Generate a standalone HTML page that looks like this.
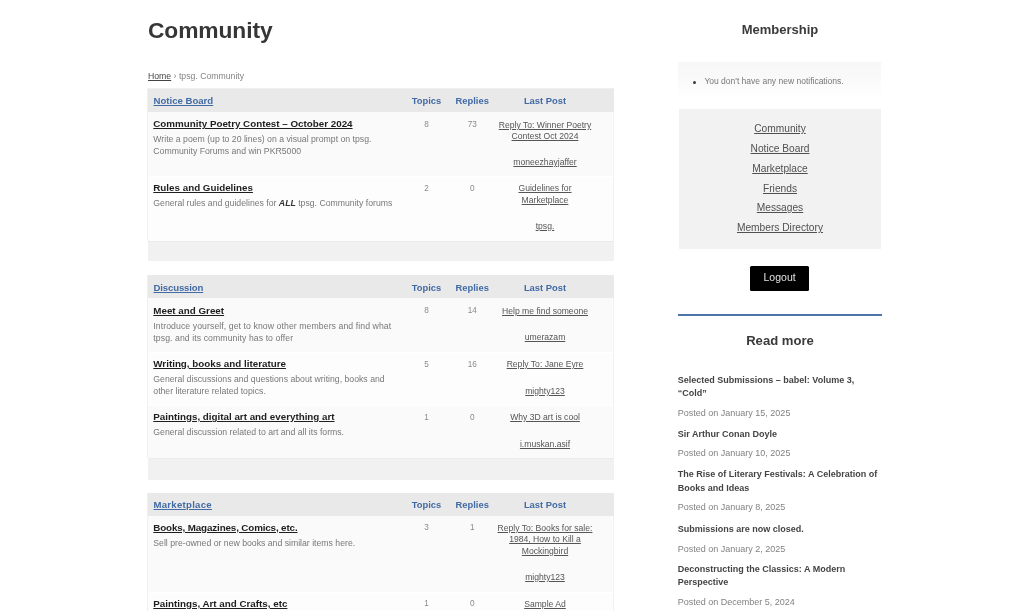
<!DOCTYPE html>
<html><head><meta charset="utf-8"><title>Community</title>
<style>
html,body{margin:0;padding:0;background:#fff;width:1024px;height:611px;overflow:hidden;}
body{position:relative;font-family:"Liberation Sans",sans-serif;filter:blur(0.3px);}
body>div{position:absolute;}
.t{white-space:nowrap;}
</style></head><body>
<div class="t" style="top:17px;font-size:22.8px;line-height:27.36px;font-weight:700;color:#363636;left:148px;letter-spacing:-0.1px;">Community</div>
<div class="t" style="top:71px;font-size:8.7px;line-height:10.44px;font-weight:400;color:#858585;left:148px;"><span style="color:#444;text-decoration:underline">Home</span> › tpsg. Community</div>
<div style="left:146.8px;top:88.4px;width:467.6px;height:23.4px;background:#f0f0f0;"></div>
<div style="left:147.6px;top:88.7px;width:466px;height:23.1px;background:#e9e9e9;"></div>
<div class="t" style="top:95px;font-size:9.6px;line-height:11.52px;font-weight:700;color:#426aa5;text-decoration:underline;left:153.5px;letter-spacing:0px;">Notice Board</div>
<div class="t" style="top:95px;font-size:9.4px;line-height:11.28px;font-weight:700;color:#426aa5;left:176.5px;width:500px;text-align:center;">Topics</div>
<div class="t" style="top:95px;font-size:9.4px;line-height:11.28px;font-weight:700;color:#426aa5;left:222.2px;width:500px;text-align:center;">Replies</div>
<div class="t" style="top:95px;font-size:9.4px;line-height:11.28px;font-weight:700;color:#426aa5;left:295px;width:500px;text-align:center;">Last Post</div>
<div style="left:146.6px;top:111.8px;width:467.8px;height:64.6px;background:#f1f1f1;"></div>
<div style="left:147.6px;top:111.8px;width:465.8px;height:64.6px;background:#fdfdfd;"></div>
<div style="left:148.4px;top:111.8px;width:464px;height:64.6px;background:#fafafa;"></div>
<div class="t" style="top:118px;font-size:9.8px;line-height:11.76px;font-weight:700;color:#1e1e1e;text-decoration:underline;left:153.3px;letter-spacing:0px;">Community Poetry Contest – October 2024</div>
<div class="t" style="top:134px;font-size:8.7px;line-height:10.44px;font-weight:400;color:#787878;left:153.3px;letter-spacing:0px;">Write a poem (up to 20 lines) on a visual prompt on tpsg.</div>
<div class="t" style="top:146px;font-size:8.7px;line-height:10.44px;font-weight:400;color:#787878;left:153.3px;letter-spacing:0px;">Community Forums and win PKR5000</div>
<div class="t" style="top:120px;font-size:8.2px;line-height:9.84px;font-weight:400;color:#8a8a8a;left:176.5px;width:500px;text-align:center;">8</div>
<div class="t" style="top:120px;font-size:8.2px;line-height:9.84px;font-weight:400;color:#8a8a8a;left:222.2px;width:500px;text-align:center;">73</div>
<div class="t" style="top:120px;font-size:8.6px;line-height:10.32px;font-weight:400;color:#555;text-decoration:underline;left:295px;width:500px;text-align:center;">Reply To: Winner Poetry</div>
<div class="t" style="top:131px;font-size:8.6px;line-height:10.32px;font-weight:400;color:#555;text-decoration:underline;left:295px;width:500px;text-align:center;">Contest Oct 2024</div>
<div class="t" style="top:157px;font-size:8.6px;line-height:10.32px;font-weight:400;color:#555;text-decoration:underline;left:295px;width:500px;text-align:center;">moneezhayjaffer</div>
<div style="left:146.6px;top:176.4px;width:467.8px;height:64.4px;background:#f1f1f1;"></div>
<div style="left:147.6px;top:176.4px;width:465.8px;height:64.4px;background:#fdfdfd;"></div>
<div style="left:148.4px;top:176.4px;width:464px;height:64.4px;background:#fdfdfd;"></div>
<div class="t" style="top:182px;font-size:9.8px;line-height:11.76px;font-weight:700;color:#1e1e1e;text-decoration:underline;left:153.3px;letter-spacing:0px;">Rules and Guidelines</div>
<div class="t" style="top:198px;font-size:8.7px;line-height:10.44px;font-weight:400;color:#787878;left:153.3px;letter-spacing:0px;">General rules and guidelines for <b style="color:#333"><i>ALL</i></b> tpsg. Community forums</div>
<div class="t" style="top:184px;font-size:8.2px;line-height:9.84px;font-weight:400;color:#8a8a8a;left:176.5px;width:500px;text-align:center;">2</div>
<div class="t" style="top:184px;font-size:8.2px;line-height:9.84px;font-weight:400;color:#8a8a8a;left:222.2px;width:500px;text-align:center;">0</div>
<div class="t" style="top:183px;font-size:8.6px;line-height:10.32px;font-weight:400;color:#555;text-decoration:underline;left:295px;width:500px;text-align:center;">Guidelines for</div>
<div class="t" style="top:195px;font-size:8.6px;line-height:10.32px;font-weight:400;color:#555;text-decoration:underline;left:295px;width:500px;text-align:center;">Marketplace</div>
<div class="t" style="top:221px;font-size:8.6px;line-height:10.32px;font-weight:400;color:#555;text-decoration:underline;left:295px;width:500px;text-align:center;">tpsg.</div>
<div style="left:147.5px;top:175.9px;width:466.7px;height:1px;background:#ffffff;"></div>
<div style="left:147.5px;top:240.8px;width:466.7px;height:20.2px;background:#f1f1f1;border-top:1px solid #ebebeb;box-sizing:border-box"></div>
<div style="left:146.8px;top:275px;width:467.6px;height:22.8px;background:#f0f0f0;"></div>
<div style="left:147.6px;top:275.3px;width:466px;height:22.5px;background:#e9e9e9;"></div>
<div class="t" style="top:282px;font-size:9.6px;line-height:11.52px;font-weight:700;color:#426aa5;text-decoration:underline;left:153.5px;letter-spacing:-0.15px;">Discussion</div>
<div class="t" style="top:282px;font-size:9.4px;line-height:11.28px;font-weight:700;color:#426aa5;left:176.5px;width:500px;text-align:center;">Topics</div>
<div class="t" style="top:282px;font-size:9.4px;line-height:11.28px;font-weight:700;color:#426aa5;left:222.2px;width:500px;text-align:center;">Replies</div>
<div class="t" style="top:282px;font-size:9.4px;line-height:11.28px;font-weight:700;color:#426aa5;left:295px;width:500px;text-align:center;">Last Post</div>
<div style="left:146.6px;top:297.8px;width:467.8px;height:54.5px;background:#f1f1f1;"></div>
<div style="left:147.6px;top:297.8px;width:465.8px;height:54.5px;background:#fdfdfd;"></div>
<div style="left:148.4px;top:297.8px;width:464px;height:54.5px;background:#fafafa;"></div>
<div class="t" style="top:305px;font-size:9.8px;line-height:11.76px;font-weight:700;color:#1e1e1e;text-decoration:underline;left:153.3px;letter-spacing:0px;">Meet and Greet</div>
<div class="t" style="top:321px;font-size:8.7px;line-height:10.44px;font-weight:400;color:#787878;left:153.3px;letter-spacing:0.08px;">Introduce yourself, get to know other members and find what</div>
<div class="t" style="top:333px;font-size:8.7px;line-height:10.44px;font-weight:400;color:#787878;left:153.3px;letter-spacing:0.08px;">tpsg. and its community has to offer</div>
<div class="t" style="top:306px;font-size:8.2px;line-height:9.84px;font-weight:400;color:#8a8a8a;left:176.5px;width:500px;text-align:center;">8</div>
<div class="t" style="top:306px;font-size:8.2px;line-height:9.84px;font-weight:400;color:#8a8a8a;left:222.2px;width:500px;text-align:center;">14</div>
<div class="t" style="top:306px;font-size:8.6px;line-height:10.32px;font-weight:400;color:#555;text-decoration:underline;left:295px;width:500px;text-align:center;">Help me find someone</div>
<div class="t" style="top:332px;font-size:8.6px;line-height:10.32px;font-weight:400;color:#555;text-decoration:underline;left:295px;width:500px;text-align:center;">umerazam</div>
<div style="left:146.6px;top:352.3px;width:467.8px;height:52.8px;background:#f1f1f1;"></div>
<div style="left:147.6px;top:352.3px;width:465.8px;height:52.8px;background:#fdfdfd;"></div>
<div style="left:148.4px;top:352.3px;width:464px;height:52.8px;background:#fdfdfd;"></div>
<div class="t" style="top:358px;font-size:9.8px;line-height:11.76px;font-weight:700;color:#1e1e1e;text-decoration:underline;left:153.3px;letter-spacing:0px;">Writing, books and literature</div>
<div class="t" style="top:374px;font-size:8.7px;line-height:10.44px;font-weight:400;color:#787878;left:153.3px;letter-spacing:0px;">General discussions and questions about writing, books and</div>
<div class="t" style="top:386px;font-size:8.7px;line-height:10.44px;font-weight:400;color:#787878;left:153.3px;letter-spacing:0px;">other literature related topics.</div>
<div class="t" style="top:360px;font-size:8.2px;line-height:9.84px;font-weight:400;color:#8a8a8a;left:176.5px;width:500px;text-align:center;">5</div>
<div class="t" style="top:360px;font-size:8.2px;line-height:9.84px;font-weight:400;color:#8a8a8a;left:222.2px;width:500px;text-align:center;">16</div>
<div class="t" style="top:359px;font-size:8.6px;line-height:10.32px;font-weight:400;color:#555;text-decoration:underline;left:295px;width:500px;text-align:center;">Reply To: Jane Eyre</div>
<div class="t" style="top:386px;font-size:8.6px;line-height:10.32px;font-weight:400;color:#555;text-decoration:underline;left:295px;width:500px;text-align:center;">mighty123</div>
<div style="left:146.6px;top:405.1px;width:467.8px;height:52.7px;background:#f1f1f1;"></div>
<div style="left:147.6px;top:405.1px;width:465.8px;height:52.7px;background:#fdfdfd;"></div>
<div style="left:148.4px;top:405.1px;width:464px;height:52.7px;background:#fafafa;"></div>
<div class="t" style="top:411px;font-size:9.8px;line-height:11.76px;font-weight:700;color:#1e1e1e;text-decoration:underline;left:153.3px;letter-spacing:0px;">Paintings, digital art and everything art</div>
<div class="t" style="top:427px;font-size:8.7px;line-height:10.44px;font-weight:400;color:#787878;left:153.3px;letter-spacing:0px;">General discussion related to art and all its forms.</div>
<div class="t" style="top:413px;font-size:8.2px;line-height:9.84px;font-weight:400;color:#8a8a8a;left:176.5px;width:500px;text-align:center;">1</div>
<div class="t" style="top:413px;font-size:8.2px;line-height:9.84px;font-weight:400;color:#8a8a8a;left:222.2px;width:500px;text-align:center;">0</div>
<div class="t" style="top:412px;font-size:8.6px;line-height:10.32px;font-weight:400;color:#555;text-decoration:underline;left:295px;width:500px;text-align:center;">Why 3D art is cool</div>
<div class="t" style="top:439px;font-size:8.6px;line-height:10.32px;font-weight:400;color:#555;text-decoration:underline;left:295px;width:500px;text-align:center;">i.muskan.asif</div>
<div style="left:147.5px;top:351.8px;width:466.7px;height:1px;background:#ffffff;"></div>
<div style="left:147.5px;top:404.6px;width:466.7px;height:1px;background:#ffffff;"></div>
<div style="left:147.5px;top:457.8px;width:466.7px;height:21.9px;background:#f1f1f1;border-top:1px solid #ebebeb;box-sizing:border-box"></div>
<div style="left:146.8px;top:492.6px;width:467.6px;height:23.4px;background:#f0f0f0;"></div>
<div style="left:147.6px;top:492.9px;width:466px;height:23.1px;background:#e9e9e9;"></div>
<div class="t" style="top:499px;font-size:9.6px;line-height:11.52px;font-weight:700;color:#426aa5;text-decoration:underline;left:153.5px;letter-spacing:0.27px;">Marketplace</div>
<div class="t" style="top:499px;font-size:9.4px;line-height:11.28px;font-weight:700;color:#426aa5;left:176.5px;width:500px;text-align:center;">Topics</div>
<div class="t" style="top:499px;font-size:9.4px;line-height:11.28px;font-weight:700;color:#426aa5;left:222.2px;width:500px;text-align:center;">Replies</div>
<div class="t" style="top:499px;font-size:9.4px;line-height:11.28px;font-weight:700;color:#426aa5;left:295px;width:500px;text-align:center;">Last Post</div>
<div style="left:146.6px;top:516px;width:467.8px;height:76.5px;background:#f1f1f1;"></div>
<div style="left:147.6px;top:516px;width:465.8px;height:76.5px;background:#fdfdfd;"></div>
<div style="left:148.4px;top:516px;width:464px;height:76.5px;background:#fafafa;"></div>
<div class="t" style="top:522px;font-size:9.8px;line-height:11.76px;font-weight:700;color:#1e1e1e;text-decoration:underline;left:153.3px;letter-spacing:-0.13px;">Books, Magazines, Comics, etc.</div>
<div class="t" style="top:538px;font-size:8.7px;line-height:10.44px;font-weight:400;color:#787878;left:153.3px;letter-spacing:0px;">Sell pre-owned or new books and similar items here.</div>
<div class="t" style="top:523px;font-size:8.2px;line-height:9.84px;font-weight:400;color:#8a8a8a;left:176.5px;width:500px;text-align:center;">3</div>
<div class="t" style="top:523px;font-size:8.2px;line-height:9.84px;font-weight:400;color:#8a8a8a;left:222.2px;width:500px;text-align:center;">1</div>
<div class="t" style="top:523px;font-size:8.6px;line-height:10.32px;font-weight:400;color:#555;text-decoration:underline;left:295px;width:500px;text-align:center;">Reply To: Books for sale:</div>
<div class="t" style="top:534px;font-size:8.6px;line-height:10.32px;font-weight:400;color:#555;text-decoration:underline;left:295px;width:500px;text-align:center;">1984, How to Kill a</div>
<div class="t" style="top:546px;font-size:8.6px;line-height:10.32px;font-weight:400;color:#555;text-decoration:underline;left:295px;width:500px;text-align:center;">Mockingbird</div>
<div class="t" style="top:572px;font-size:8.6px;line-height:10.32px;font-weight:400;color:#555;text-decoration:underline;left:295px;width:500px;text-align:center;">mighty123</div>
<div style="left:146.6px;top:592.5px;width:467.8px;height:67.5px;background:#f1f1f1;"></div>
<div style="left:147.6px;top:592.5px;width:465.8px;height:67.5px;background:#fdfdfd;"></div>
<div style="left:148.4px;top:592.5px;width:464px;height:67.5px;background:#fdfdfd;"></div>
<div class="t" style="top:598px;font-size:9.8px;line-height:11.76px;font-weight:700;color:#1e1e1e;text-decoration:underline;left:153.3px;letter-spacing:0px;">Paintings, Art and Crafts, etc</div>
<div class="t" style="top:599px;font-size:8.2px;line-height:9.84px;font-weight:400;color:#8a8a8a;left:176.5px;width:500px;text-align:center;">1</div>
<div class="t" style="top:599px;font-size:8.2px;line-height:9.84px;font-weight:400;color:#8a8a8a;left:222.2px;width:500px;text-align:center;">0</div>
<div class="t" style="top:599px;font-size:8.6px;line-height:10.32px;font-weight:400;color:#555;text-decoration:underline;left:295px;width:500px;text-align:center;">Sample Ad</div>
<div style="left:147.5px;top:592px;width:466.7px;height:1px;background:#ffffff;"></div>
<div class="t" style="top:22px;font-size:13.0px;line-height:15.6px;font-weight:700;color:#3a3a3a;left:530px;width:500px;text-align:center;">Membership</div>
<div style="left:678px;top:62px;width:203px;height:38px;background:linear-gradient(#f7f7f7, #f9f9f9 40%, #ffffff);"></div>
<div style="left:693px;top:80.5px;width:3px;height:3px;border-radius:50%;background:#3a3a3a"></div>
<div class="t" style="top:76px;font-size:8.5px;line-height:10.2px;font-weight:400;color:#777;left:704.4px;">You don't have any new notifications.</div>
<div style="left:678.6px;top:109.3px;width:202.4px;height:139.9px;background:#f2f2f2;"></div>
<div class="t" style="top:123px;font-size:10.2px;line-height:12.24px;font-weight:400;color:#505050;text-decoration:underline;left:530px;width:500px;text-align:center;">Community</div>
<div class="t" style="top:143px;font-size:10.2px;line-height:12.24px;font-weight:400;color:#505050;text-decoration:underline;left:530px;width:500px;text-align:center;">Notice Board</div>
<div class="t" style="top:163px;font-size:10.2px;line-height:12.24px;font-weight:400;color:#505050;text-decoration:underline;left:530px;width:500px;text-align:center;">Marketplace</div>
<div class="t" style="top:183px;font-size:10.2px;line-height:12.24px;font-weight:400;color:#505050;text-decoration:underline;left:530px;width:500px;text-align:center;">Friends</div>
<div class="t" style="top:202px;font-size:10.2px;line-height:12.24px;font-weight:400;color:#505050;text-decoration:underline;left:530px;width:500px;text-align:center;">Messages</div>
<div class="t" style="top:222px;font-size:10.2px;line-height:12.24px;font-weight:400;color:#505050;text-decoration:underline;left:530px;width:500px;text-align:center;">Members Directory</div>
<div style="left:750.3px;top:265.5px;width:58.5px;height:25px;background:#000;border-radius:1.5px"></div>
<div class="t" style="top:271px;font-size:10.5px;line-height:12.6px;font-weight:400;color:#e0e0e0;left:529.6px;width:500px;text-align:center;">Logout</div>
<div style="left:678px;top:314px;width:203.5px;height:2px;background:#4e75a8;"></div>
<div class="t" style="top:333px;font-size:13.1px;line-height:15.72px;font-weight:700;color:#3a3a3a;left:530px;width:500px;text-align:center;">Read more</div>
<div class="t" style="top:375px;font-size:9.0px;line-height:10.8px;font-weight:700;color:#444;left:677.8px;">Selected Submissions – babel: Volume 3,</div>
<div class="t" style="top:388px;font-size:9.0px;line-height:10.8px;font-weight:700;color:#444;left:677.8px;">“Cold”</div>
<div class="t" style="top:408px;font-size:9.0px;line-height:10.8px;font-weight:400;color:#828282;left:677.8px;">Posted on January 15, 2025</div>
<div class="t" style="top:429px;font-size:9.0px;line-height:10.8px;font-weight:700;color:#444;left:677.8px;">Sir Arthur Conan Doyle</div>
<div class="t" style="top:448px;font-size:9.0px;line-height:10.8px;font-weight:400;color:#828282;left:677.8px;">Posted on January 10, 2025</div>
<div class="t" style="top:469px;font-size:9.0px;line-height:10.8px;font-weight:700;color:#444;left:677.8px;">The Rise of Literary Festivals: A Celebration of</div>
<div class="t" style="top:483px;font-size:9.0px;line-height:10.8px;font-weight:700;color:#444;left:677.8px;">Books and Ideas</div>
<div class="t" style="top:502px;font-size:9.0px;line-height:10.8px;font-weight:400;color:#828282;left:677.8px;">Posted on January 8, 2025</div>
<div class="t" style="top:524px;font-size:9.0px;line-height:10.8px;font-weight:700;color:#444;left:677.8px;">Submissions are now closed.</div>
<div class="t" style="top:544px;font-size:9.0px;line-height:10.8px;font-weight:400;color:#828282;left:677.8px;">Posted on January 2, 2025</div>
<div class="t" style="top:564px;font-size:9.0px;line-height:10.8px;font-weight:700;color:#444;left:677.8px;">Deconstructing the Classics: A Modern</div>
<div class="t" style="top:577px;font-size:9.0px;line-height:10.8px;font-weight:700;color:#444;left:677.8px;">Perspective</div>
<div class="t" style="top:597px;font-size:9.0px;line-height:10.8px;font-weight:400;color:#828282;left:677.8px;">Posted on December 5, 2024</div>
</body></html>
